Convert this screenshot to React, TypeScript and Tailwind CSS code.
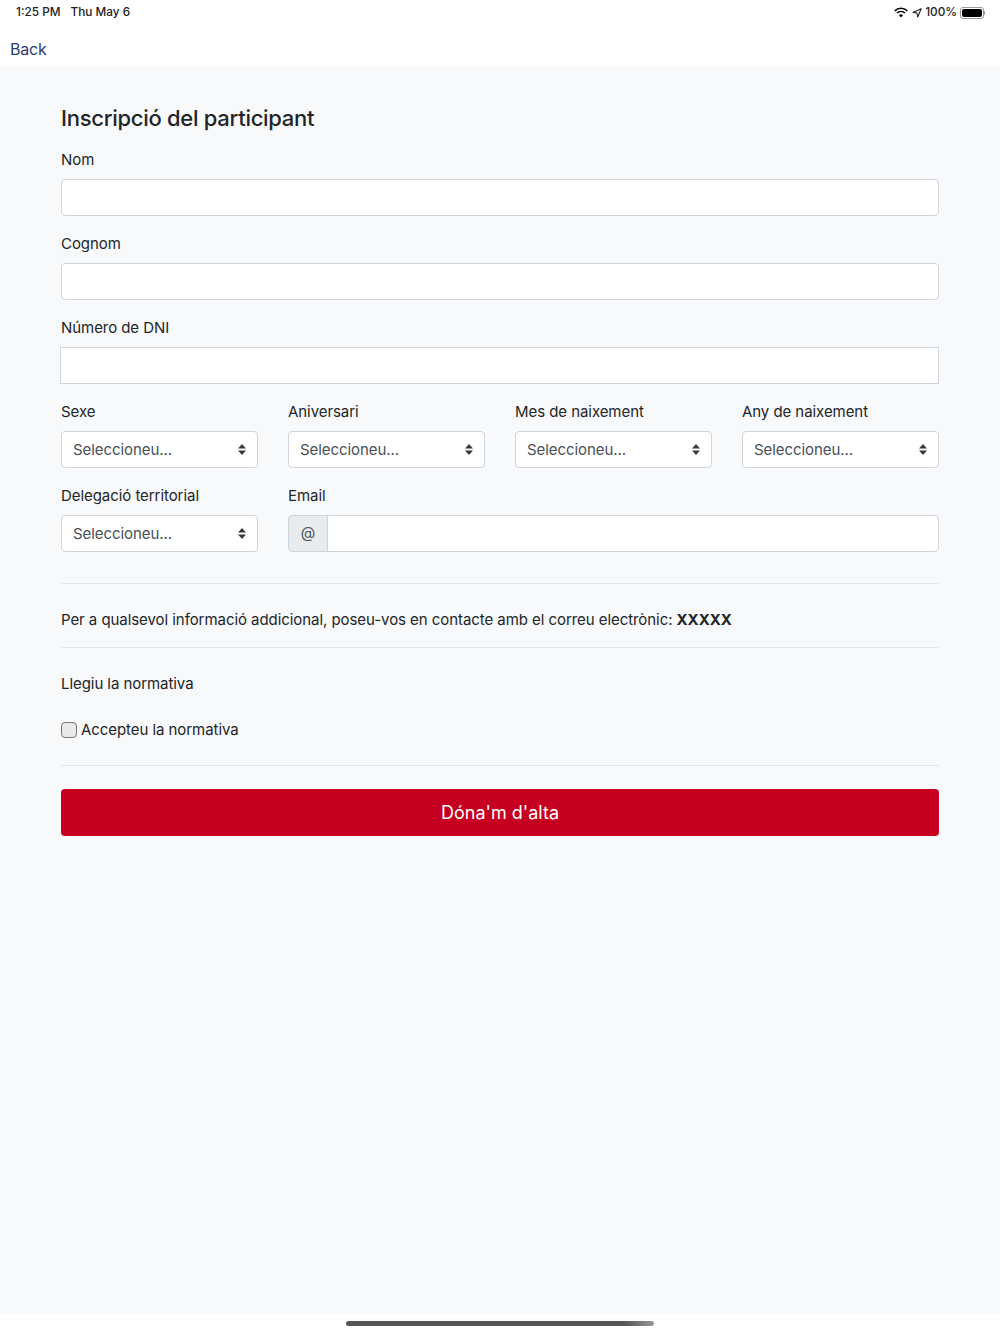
const fields = ["Nom", "Cognom"];
const selects = ["Sexe", "Aniversari", "Mes de naixement", "Any de naixement"];

function SelectBox() {
  return (
    <div className="flex h-[37px] items-center justify-between rounded border border-[#ced4da] bg-white pl-[11px] pr-[12px] text-[#495057]">
      <span className="pt-0.5 text-[15px]">Seleccioneu...</span>
      <svg width="8" height="11" viewBox="0 0 8 11" className="translate-x-px text-[#343a40]">
        <path d="M4 0 8 4.4H0zM4 11 0 6.6h8z" fill="currentColor" />
      </svg>
    </div>
  );
}

function Field({ label, children }: { label: string; children: React.ReactNode }) {
  return (
    <div>
      <label className="mb-[7px] block h-6 leading-6">{label}</label>
      {children}
    </div>
  );
}

export default function App() {
  return (
    <div className="flex h-[1334px] flex-col bg-white font-['Inter','Liberation_Sans',sans-serif] text-[15px] tracking-[-0.06px] text-[#212529]">
      {/* Status bar */}
      <div className="flex h-6 items-center justify-between pl-4 pr-[15px] pt-px text-[11.8px] font-medium tracking-normal text-[#222]">
        <div className="flex gap-[10px]">
          <span>1:25 PM</span>
          <span>Thu May 6</span>
        </div>
        <div className="flex items-center">
          <svg width="14" height="11" viewBox="0 0 14 11" fill="none" stroke="#000">
            <path d="M.8 3.8a9 9 0 0 1 12.4 0" strokeWidth="1.6" />
            <path d="M3 6a6 6 0 0 1 8 0" strokeWidth="1.6" />
            <path d="M7 10.6 5 8.2a3 3 0 0 1 4 0z" fill="#000" stroke="none" />
          </svg>
          <svg width="10" height="10" viewBox="0 0 10 10" fill="none" stroke="#222" className="ml-1">
            <path d="M9.2.8 1 4.4l4 .6.7 4z" strokeWidth="1.1" strokeLinejoin="round" />
          </svg>
          <span className="ml-[3.5px]">100%</span>
          <div className="ml-[3px] flex items-center">
            <div className="flex h-[12px] w-[24px] items-center rounded-[3px] border border-[#999] p-px">
              <div className="h-full w-full rounded-[2px] bg-black" />
            </div>
            <div className="h-1 w-px rounded-r bg-[#999]" />
          </div>
        </div>
      </div>

      {/* Nav */}
      <div className="flex h-[42px] items-center pl-[10px] pt-[8px]">
        <a className="text-[16px] leading-6 tracking-[-0.2px] text-[#2a3a75]">Back</a>
      </div>

      {/* Form */}
      <main className="flex-1 bg-[#f8f9fa] px-[61px] pt-[37px]">
        <h1 className="mb-[15px] h-[30px] text-[22px] font-medium leading-[30px] tracking-[-0.28px]">
          Inscripció del participant
        </h1>

        <div className="flex flex-col gap-4">
          {fields.map((f) => (
            <Field key={f} label={f}>
              <div className="h-[37px] rounded border border-[#ced4da] bg-white" />
            </Field>
          ))}
          {/* this one sits a pixel further left, with square corners */}
          <Field label="Número de DNI">
            <div className="-ml-px h-[37px] border border-[#ced4da] bg-white" />
          </Field>
        </div>

        <div className="mt-4 grid grid-cols-4 gap-x-[30px] gap-y-4">
          {selects.map((s) => (
            <Field key={s} label={s}>
              <SelectBox />
            </Field>
          ))}
          <Field label="Delegació territorial">
            <SelectBox />
          </Field>
          <div className="col-span-3">
            <Field label="Email">
              <div className="flex h-[37px]">
                <div className="flex w-10 items-center justify-center rounded-l border border-[#ced4da] bg-[#e9ecef] text-[#495057]">
                  @
                </div>
                <div className="-ml-px flex-1 rounded-r border border-[#ced4da] bg-white" />
              </div>
            </Field>
          </div>
        </div>

        <hr className="mt-[31px] border-[#e4e6e8]" />
        <p className="mt-6 h-6 leading-6">
          Per a qualsevol informació addicional, poseu-vos en contacte amb el correu electrònic: <b>XXXXX</b>
        </p>
        <hr className="mt-[15px] border-[#e4e6e8]" />
        <p className="mt-6 h-6 leading-6">Llegiu la normativa</p>
        <label className="mt-[22px] flex h-6 items-center leading-6">
          <span className="mb-px mr-1 h-4 w-4 rounded-[4px] border-[1.5px] border-[#777] bg-[#e9e9eb]" />
          Accepteu la normativa
        </label>
        <hr className="mt-[23px] border-[#e4e6e8]" />
        <button className="mt-[23px] h-[47px] w-full rounded bg-[#c60020] text-[18px] tracking-normal text-white">
          Dóna'm d'alta
        </button>
      </main>

      {/* Home indicator */}
      <div className="flex h-5 items-start justify-center pt-[7px]">
        <div className="h-[5px] w-[308px] rounded-full bg-gradient-to-r from-[#555] from-90% to-[#999]" />
      </div>
    </div>
  );
}
